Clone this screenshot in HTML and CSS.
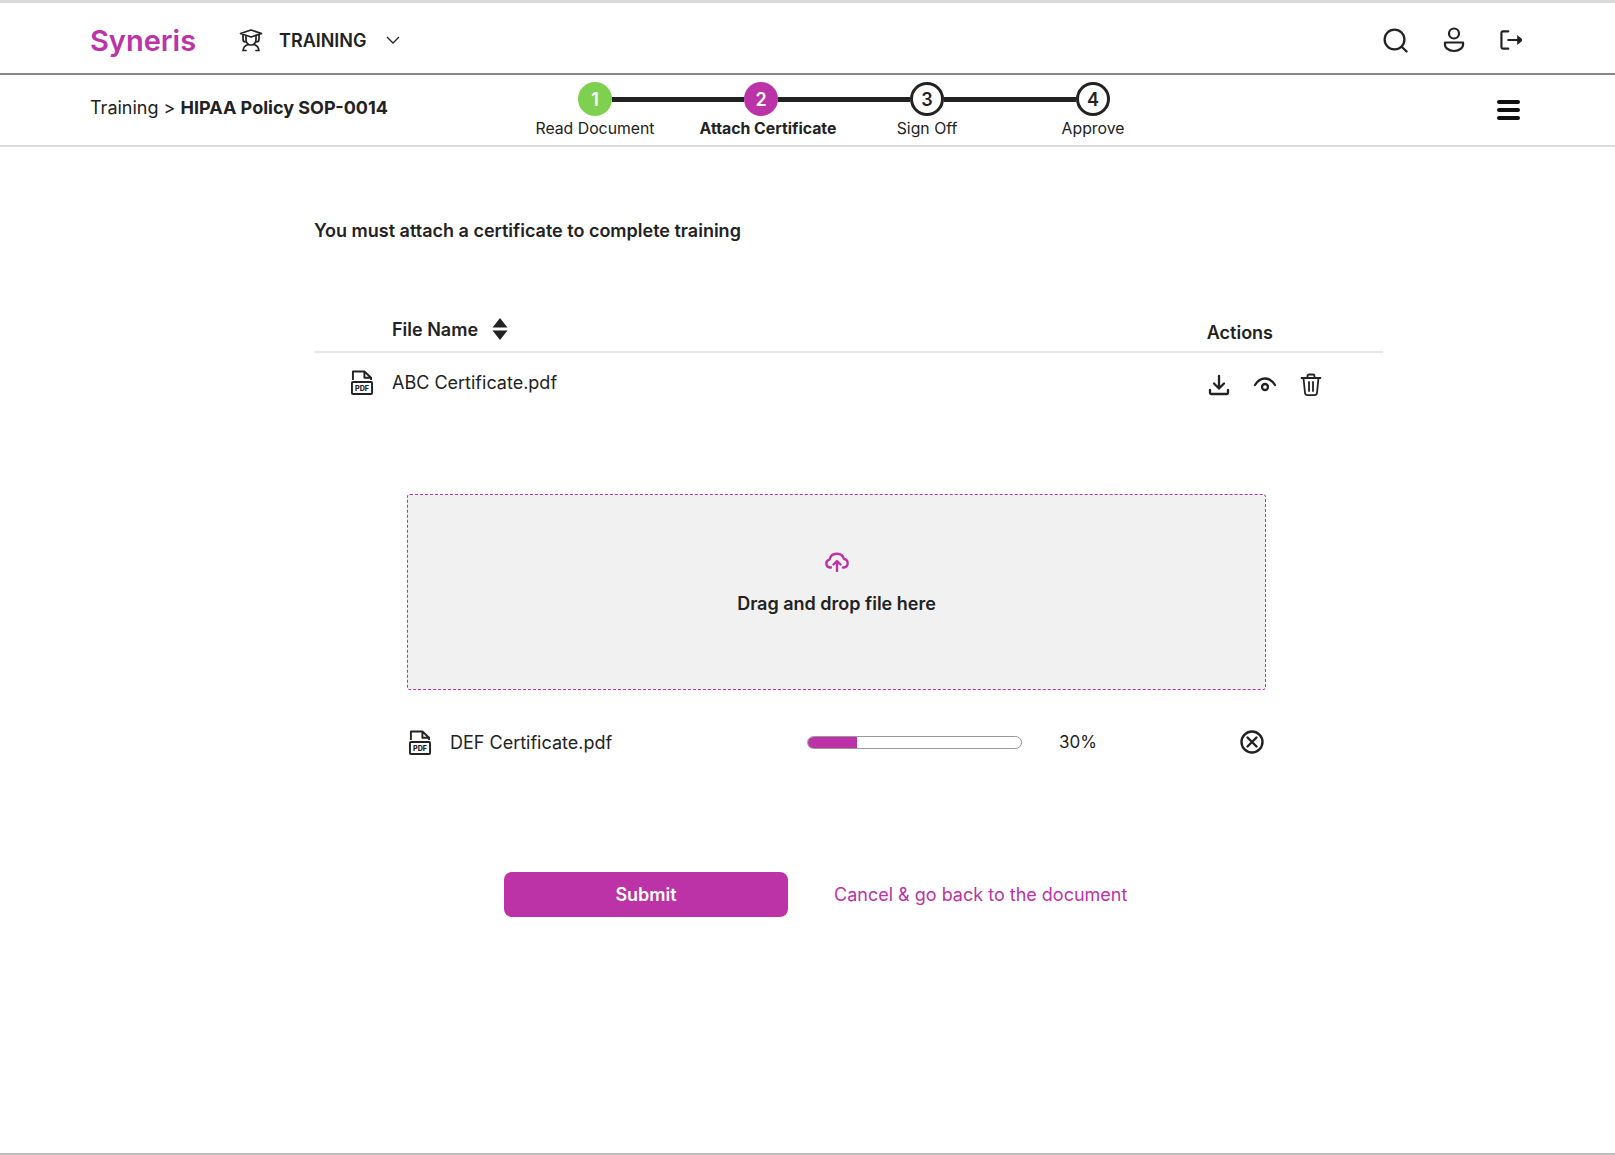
FILE: index.html
```html
<!DOCTYPE html>
<html lang="en">
<head>
  <meta charset="UTF-8" />
  <title>Syneris Training</title>
  <link rel="stylesheet" href="styles.css">
</head>
<body>
  <div class="page">
    <header class="topbar">
      <div class="brand">Syneris</div>
      <svg class="module-icon" width="24" height="24" viewBox="0 0 24 24" fill="none" stroke="#222" stroke-width="1.700" stroke-linejoin="round" stroke-linecap="round">
        <path d="M1.500 5.500 12 2l10.500 3.500L12 9z"/>
        <path d="M4 7v4c0 2 1 3 2.500 3M20 7v4c0 2-1 3-2.500 3"/>
        <path d="M7 8.500v3.500a5 5 0 0 0 10 0V8.500"/>
        <path d="M4 22.500c.5-3.500 3-5.500 5.500-6M20 22.500c-.5-3.500-3-5.500-5.500-6M4 22.500h3M20 22.500h-3"/>
      </svg>
      <div class="module-name">TRAINING</div>
      <svg class="chevron" width="14" height="8" viewBox="0 0 14 8" fill="none" stroke="#222" stroke-width="1.300"><path d="M1 1l6 6 6-6"/></svg>
      <div class="top-icons">
        <svg width="25" height="25" viewBox="0 0 26 26" fill="none" stroke="#222" stroke-width="2.400" stroke-linecap="round"><circle cx="12" cy="12" r="10.300"/><path d="M19.500 19.500l5 5"/></svg>
        <svg width="22" height="26" viewBox="0 0 22 26" fill="none" stroke="#222" stroke-width="2.200"><circle cx="11" cy="6.500" r="5"/><path d="M2 15.500h18c1 5-3.500 8.500-9 8.500s-10-3.500-9-8.500z" stroke-linejoin="round"/></svg>
        <svg width="22" height="20" viewBox="0 0 24 22" fill="none" stroke="#222" stroke-width="2.400" stroke-linecap="round"><path d="M9 1.500H3a1.500 1.500 0 0 0-1.500 1.500v16A1.500 1.500 0 0 0 3 20.500h6"/><path d="M9 11h12"/><path d="M20 8l3.500 3-3.500 3z" fill="#222"/></svg>
      </div>
    </header>

    <div class="subbar">
      <div class="breadcrumb">Training &gt; <b>HIPAA Policy SOP-0014</b></div>
      <div class="stepper">
        <div class="step-track">
          <span class="dot done">1</span><span class="link"></span>
          <span class="dot active">2</span><span class="link"></span>
          <span class="dot">3</span><span class="link"></span>
          <span class="dot">4</span>
        </div>
        <div class="step-labels">
          <span>Read Document</span>
          <span class="current">Attach Certificate</span>
          <span>Sign Off</span>
          <span>Approve</span>
        </div>
      </div>
      <div class="burger"><i></i><i></i><i></i></div>
    </div>

    <main class="content">
      <p class="notice">You must attach a certificate to complete training</p>

      <div class="table-head">
        <div class="th-name">File Name</div>
        <svg class="sort" width="16" height="22" viewBox="0 0 16 22" fill="#222"><path d="M8 0l7.500 9.500H.5zM8 22L.5 12.500h15z"/></svg>
        <div class="th-actions">Actions</div>
      </div>
      <div class="table-row">
        <svg class="pdf" width="22" height="25" viewBox="0 0 23 26" fill="none" stroke="#222" stroke-width="2">
          <path d="M2 10.500V1.500h12L21 8v2.500M14 1.500V8h7" stroke-linejoin="round"/>
          <rect x="1" y="12.500" width="21" height="12.500" rx="1"/>
          <text x="11.500" y="21.800" class="pdf-text">PDF</text>
        </svg>
        <div class="file-name">ABC Certificate.pdf</div>
        <div class="row-actions">
          <svg width="22" height="22" viewBox="0 0 22 22" fill="none" stroke="#222" stroke-width="2.300" stroke-linecap="round" stroke-linejoin="round"><path d="M11 2v12M6 9.500l5 5 5-5M2 16v2.500A1.500 1.500 0 0 0 3.500 20h15a1.500 1.500 0 0 0 1.500-1.500V16"/></svg>
          <svg width="24" height="22" viewBox="0 0 24 22" fill="none" stroke="#222" stroke-width="2.300" stroke-linecap="round"><path d="M2 11c2.500-4 6-6.500 10-6.500S19.500 7 22 11"/><circle cx="12" cy="13" r="3"/></svg>
          <svg width="22" height="24" viewBox="0 0 22 24" fill="none" stroke="#222" stroke-width="1.800" stroke-linecap="round" stroke-linejoin="round"><path d="M1.500 5h19M7.500 5V3A1.500 1.500 0 0 1 9 1.500h4A1.500 1.500 0 0 1 14.500 3v2M3.500 5l1.500 15a2.500 2.500 0 0 0 2.500 2.200h7a2.500 2.500 0 0 0 2.500-2.200L18.500 5M9 9v9M13 9v9"/></svg>
        </div>
      </div>

      <div class="dropzone">
        <svg width="24" height="20" viewBox="0 0 24 20" fill="none" stroke="#bb33a6" stroke-width="2.400" stroke-linecap="round" stroke-linejoin="round"><path d="M6 15.500H5a4 4 0 0 1-.5-7.900A7.500 7.500 0 0 1 19 7a4.300 4.300 0 0 1 0 8.500h-1"/><path d="M12 19V9.500M8.500 12.500 12 9l3.500 3.500"/></svg>
        <div class="drop-text">Drag and drop file here</div>
      </div>

      <div class="upload-row">
        <svg class="pdf" width="22" height="25" viewBox="0 0 23 26" fill="none" stroke="#222" stroke-width="2">
          <path d="M2 10.500V1.500h12L21 8v2.500M14 1.500V8h7" stroke-linejoin="round"/>
          <rect x="1" y="12.500" width="21" height="12.500" rx="1"/>
          <text x="11.500" y="21.800" class="pdf-text">PDF</text>
        </svg>
        <div class="upload-name">DEF Certificate.pdf</div>
        <div class="progress"><div class="progress-fill" style="width: 23%"></div></div>
        <div class="percent">30%</div>
        <svg class="remove" width="24" height="24" viewBox="0 0 24 24" fill="none" stroke="#222" stroke-width="2.400" stroke-linecap="round"><circle cx="12" cy="12" r="10.500"/><path d="M7.500 7.500l9 9M16.500 7.500l-9 9"/></svg>
      </div>

      <div class="form-actions">
        <button class="submit">Submit</button>
        <a class="cancel" href="#">Cancel &amp; go back to the document</a>
      </div>
    </main>
  </div>
</body>
</html>
```

FILE: styles.css
```css
* {
  box-sizing: border-box;
}

body {
  margin: 0;
  font-family: Inter, "Liberation Sans", sans-serif;
  color: #222;
  background: white;
}

.page {
  height: 1155px;
  overflow: hidden;
  border-top: 3px solid #d9d9d9;
  border-bottom: 2px solid #bbb;
}

.topbar {
  height: 72px;
  display: flex;
  align-items: center;
  padding: 4px 93px 0 90px;
  border-bottom: 2px solid #888;
}

.brand {
  width: 149px;
  font-size: 29px;
  font-weight: 600;
  color: #bb33a6;
}

.module-icon {
  margin-right: 16px;
}

.module-name {
  font-size: 18px;
  font-weight: 600;
  margin-right: 19px;
}

.top-icons {
  margin-left: auto;
  display: flex;
  align-items: center;
  gap: 35px;
}

.subbar {
  height: 72px;
  display: flex;
  padding: 0 95px 0 90px;
  border-bottom: 2px solid #ddd;
}

.breadcrumb {
  width: 422px;
  padding-top: 22px;
  font-size: 18px;
}

.breadcrumb b {
  font-weight: 700;
}

.stepper {
  width: 664px;
  padding-top: 7px;
}

.step-track {
  display: flex;
  align-items: center;
  padding: 0 66px;
}

.dot {
  width: 34px;
  height: 34px;
  flex: none;
  display: flex;
  align-items: center;
  justify-content: center;
  border: 3px solid #222;
  border-radius: 50%;
  font-size: 18px;
  font-weight: 600;
}

.dot.done {
  background: #7ed04f;
  border-color: #7ed04f;
  color: white;
}

.dot.active {
  background: #bb33a6;
  border-color: #bb33a6;
  color: white;
}

.link {
  flex: 1;
  height: 5px;
  background: #222;
}

.step-labels {
  display: grid;
  grid-template-columns: repeat(4, 166px);
  margin-top: 3px;
  font-size: 15.800px;
  text-align: center;
}

.step-labels .current {
  font-weight: 700;
  padding-left: 14px;
  white-space: nowrap;
}

.burger {
  margin-left: auto;
  padding-top: 25px;
}

.burger i {
  display: block;
  width: 23px;
  height: 4px;
  margin-bottom: 4px;
  border-radius: 2px;
  background: #111;
}

.content {
  width: 1069px;
  margin-left: 314px;
}

.notice {
  margin: 72px 0 0;
  font-size: 18px;
  font-weight: 600;
  line-height: 24px;
}

.table-head {
  height: 68px;
  margin-top: 42px;
  display: flex;
  align-items: flex-end;
  padding-left: 78px;
  padding-bottom: 8px;
  border-bottom: 2px solid #e8e8e8;
  font-size: 18px;
  font-weight: 600;
}

.th-name {
  margin-bottom: 3px;
}

.sort {
  margin: 0 0 3px 14px;
}

.th-actions {
  margin-left: auto;
  margin-right: 110px;
}

.table-row {
  height: 59px;
  display: flex;
  align-items: center;
  padding-left: 37px;
  font-size: 18px;
}

.pdf {
  flex: none;
}

.pdf-text {
  font-size: 7.500px;
  font-weight: 800;
  text-anchor: middle;
  fill: #222;
  stroke: none;
}

.file-name {
  margin-left: 19px;
}

.row-actions {
  margin-left: auto;
  margin-right: 61px;
  display: flex;
  align-items: center;
  gap: 23px;
  padding-top: 4px;
}

.dropzone {
  width: 859px;
  height: 196px;
  margin: 82px 0 0 93px;
  padding-top: 57px;
  background: #f1f1f1;
  border: 1px dashed #bb33a6;
  border-radius: 3px;
  text-align: center;
}

.drop-text {
  margin-top: 17px;
  font-size: 18px;
  font-weight: 600;
}

.upload-row {
  height: 26px;
  margin: 39px 0 0 95px;
  display: flex;
  align-items: center;
  font-size: 18px;
}

.upload-name {
  width: 357px;
  margin-left: 19px;
}

.progress {
  width: 215px;
  height: 13px;
  overflow: hidden;
  background: white;
  border: 1px solid #999;
  border-radius: 7px;
}

.progress-fill {
  height: 100%;
  background: #bb33a6;
}

.percent {
  margin-left: 37px;
  font-size: 17px;
}

.remove {
  margin-left: auto;
  margin-right: 119px;
}

.form-actions {
  margin: 117px 0 0 190px;
  display: flex;
  align-items: center;
  gap: 46px;
}

.submit {
  width: 284px;
  height: 45px;
  border: none;
  border-radius: 8px;
  background: #bb33a6;
  color: white;
  font-family: inherit;
  font-size: 18px;
  font-weight: 600;
}

.cancel {
  color: #bb33a6;
  font-size: 18px;
  text-decoration: none;
}
```
